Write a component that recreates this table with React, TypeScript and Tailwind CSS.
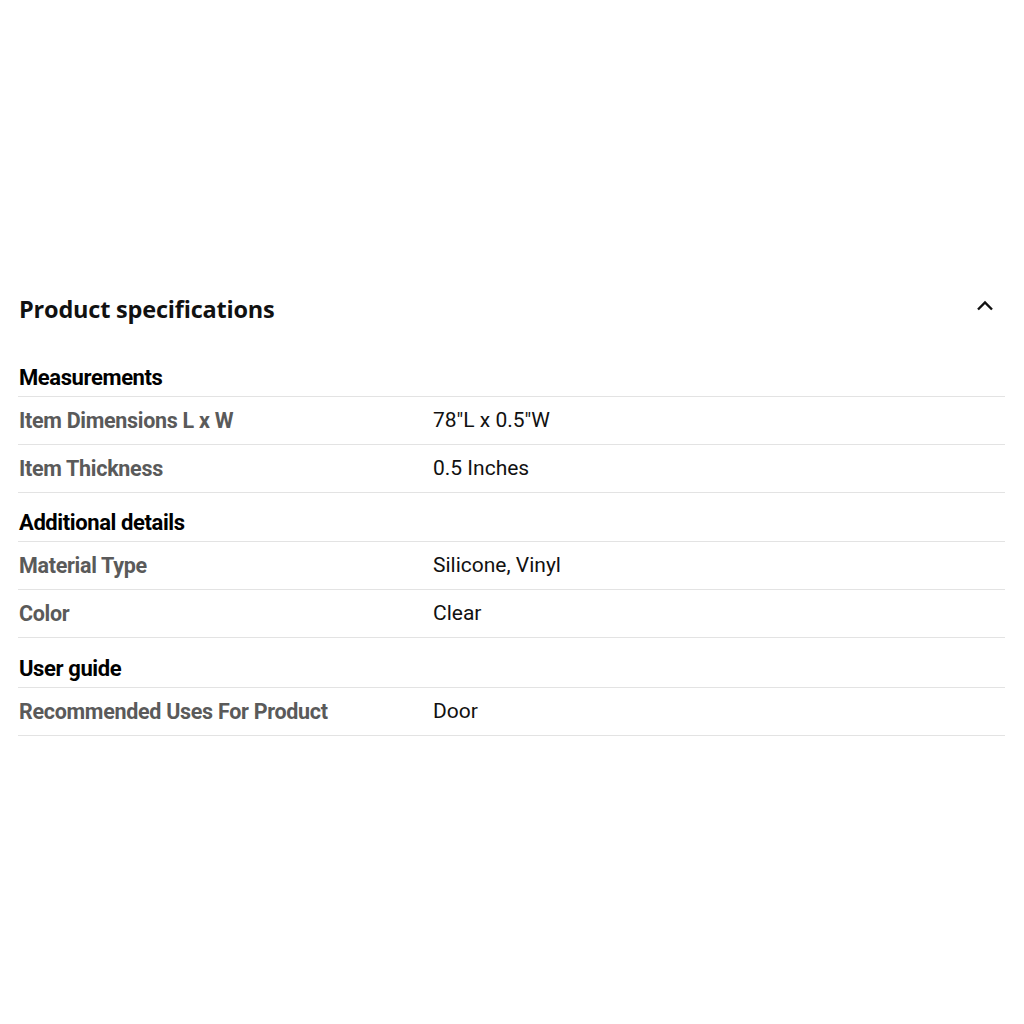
const sections = [
  {
    title: "Measurements",
    rows: [
      ["Item Dimensions L x W", '78"L x 0.5"W'],
      ["Item Thickness", "0.5 Inches"],
    ],
  },
  {
    title: "Additional details",
    rows: [
      ["Material Type", "Silicone, Vinyl"],
      ["Color", "Clear"],
    ],
  },
  {
    title: "User guide",
    rows: [["Recommended Uses For Product", "Door"]],
  },
];

const App = () => {
  return (
    <div className="w-[1024px] h-[1024px] bg-white pt-[289px] pl-[18px] pr-[19px] font-['Roboto',sans-serif]">
      <div className="flex items-center justify-between h-[42px]">
        <h2 className="pl-[1px] text-[23.5px] font-bold text-[#111] font-['Open_Sans',sans-serif] tracking-[-0.2px]">
          Product specifications
        </h2>
        <svg width="20" height="20" viewBox="0 0 20 20" className="mr-[10px] -mt-[8px]">
          <path d="M3 13.5 L10 6.5 L17 13.5" fill="none" stroke="#111" strokeWidth="2.4" />
        </svg>
      </div>
      <div className="mt-[31px]">
        {sections.map((s, i) => (
          <div key={s.title}>
            <div
              className={`pl-[1px] border-b border-[#e3e3e3] text-[22px] font-bold text-black ${
                i === 0 ? "pt-[2px] pb-[4px]" : i === 1 ? "pt-[16px] pb-[4px]" : "pt-[17px] pb-[4px]"
              } leading-[28px] tracking-[-0.4px]`}
            >
              {s.title}
            </div>
            {s.rows.map(([k, v]) => (
              <div key={k} className="flex items-center pt-[1px] h-[48px] border-b border-[#e3e3e3]">
                <div className="w-[415px] pl-[1px] text-[21.5px] font-bold text-[#5a5a5a] tracking-[-0.3px]">{k}</div>
                <div className="text-[21px] text-[#111]">{v}</div>
              </div>
            ))}
          </div>
        ))}
      </div>
    </div>
  );
};

export default App;
